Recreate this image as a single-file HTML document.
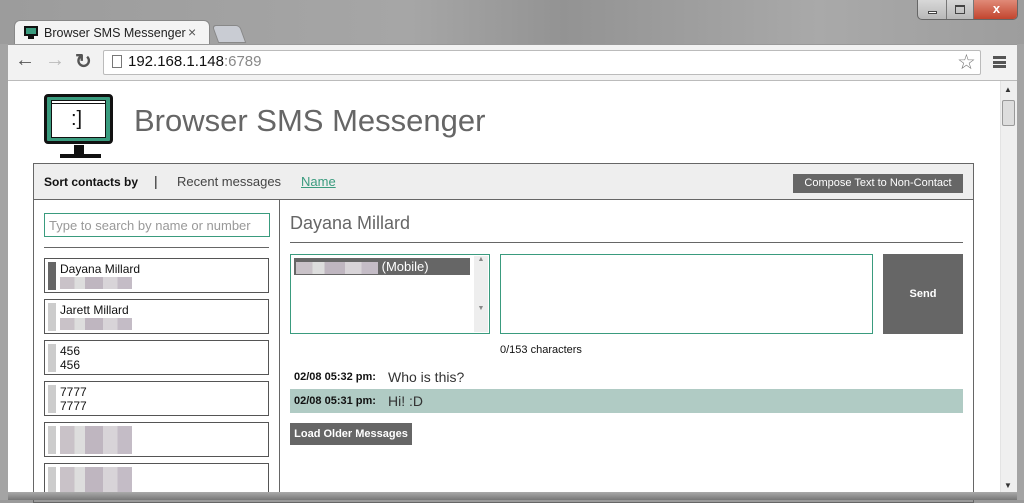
<!DOCTYPE html>
<html><head><style>
*{margin:0;padding:0;box-sizing:border-box}
body{width:1024px;height:500px;overflow:hidden;font-family:"Liberation Sans",sans-serif;background:#9a9a9a;position:relative}
.a{position:absolute}
.blur{display:inline-block;height:12px;background:linear-gradient(90deg,#c9c2c8 0 20%,#ddd 20% 35%,#bfb6c0 35% 60%,#d8d4d8 60% 80%,#c4bcc6 80%)}
</style></head><body>
<div class="a" style="left:0;top:0;width:1024px;height:46px;background:linear-gradient(90deg,#9c9c9c,#a6a6a6 40%,#939393 55%,#a9a9a9 80%,#9d9d9d)"></div>
<!-- window buttons -->
<div class="a" style="left:917px;top:0;width:101px;height:20px;border:1px solid #666;border-top:none;border-radius:0 0 5px 5px;background:linear-gradient(#d8d8d8,#b8b8b8);overflow:hidden">
<div class="a" style="left:0;top:0;width:29px;height:19px;border-right:1px solid #777"></div>
<div class="a" style="left:10px;top:11px;width:9px;height:3px;border:1px solid #444;background:#fff"></div>
<div class="a" style="left:29px;top:0;width:27px;height:19px;border-right:1px solid #777"></div>
<div class="a" style="left:37px;top:5px;width:10px;height:9px;border:1px solid #444;border-top-width:2px"></div>
<div class="a" style="left:56px;top:0;width:45px;height:19px;background:linear-gradient(#e08a78,#c2452e);color:#fff;font-weight:bold;font-size:13px;text-align:center;line-height:18px">x</div>
</div>
<!-- tab -->
<div class="a" style="left:14px;top:20px;width:196px;height:27px;background:#f4f4f4;border:1px solid #888;border-bottom:none;border-radius:6px 6px 0 0"></div>
<div class="a" style="left:24px;top:26px;width:14px;height:10px;border:2px solid #111;background:#3a9b7e"></div>
<div class="a" style="left:28px;top:36px;width:6px;height:3px;background:#111"></div>
<div class="a" style="left:44px;top:26px;font-size:12.5px;color:#222">Browser SMS Messenger</div>
<div class="a" style="left:188px;top:24px;font-size:14px;color:#555">×</div>
<div class="a" style="left:215px;top:25px;width:28px;height:18px;background:#c9ccd3;border:1px solid #888;border-radius:4px 4px 0 0;transform:skewX(20deg)"></div>
<!-- toolbar -->
<div class="a" style="left:8px;top:44px;width:1010px;height:37px;background:#f2f2f2;border-top:1px solid #999;border-bottom:1px solid #bbb"></div>
<div class="a" style="left:15px;top:49px;font-size:20px;color:#555;font-weight:bold">&#8592;</div>
<div class="a" style="left:45px;top:49px;font-size:20px;color:#bbb;font-weight:bold">&#8594;</div>
<div class="a" style="left:75px;top:49px;font-size:20px;color:#555;font-weight:bold">&#8635;</div>
<div class="a" style="left:103px;top:50px;width:878px;height:25px;background:#fff;border:1px solid #bbb;border-radius:2px"></div>
<div class="a" style="left:112px;top:55px;width:10px;height:13px;border:1px solid #777"></div>
<div class="a" style="left:128px;top:53px;font-size:15px;color:#111">192.168.1.148<span style="color:#888">:6789</span></div>
<div class="a" style="left:957px;top:50px;font-size:21px;color:#777">☆</div>
<div class="a" style="left:993px;top:56px;width:13px;height:12px;border-top:3px solid #555;border-bottom:3px solid #555"><div style="margin-top:2px;height:3px;background:#555"></div></div>
<!-- content -->
<div class="a" style="left:8px;top:81px;width:992px;height:411px;background:#fff"></div>
<div class="a" style="left:1000px;top:81px;width:17px;height:411px;background:#efefef;border-left:1px solid #e3e3e3"></div>
<div class="a" style="left:1002px;top:100px;width:13px;height:26px;background:#ddd;border:1px solid #999;border-radius:2px"></div>
<div class="a" style="left:1004px;top:85px;font-size:8px;color:#333">▲</div>
<div class="a" style="left:1004px;top:481px;font-size:8px;color:#333">▼</div>
<!-- logo -->
<div class="a" style="left:44px;top:94px;width:69px;height:50px;background:#3a9b7e;border:3px solid #111;border-radius:4px"></div>
<div class="a" style="left:51px;top:100px;width:55px;height:38px;background:#fff;border:1px solid #111"></div>
<div class="a" style="left:52px;top:102px;width:53px;height:2px;border-bottom:1px solid #111"></div>
<div class="a" style="left:71px;top:108px;font-size:20px;color:#111">:]</div>
<div class="a" style="left:74px;top:145px;width:10px;height:9px;background:#111"></div>
<div class="a" style="left:60px;top:154px;width:41px;height:4px;background:#111"></div>
<div class="a" style="left:134px;top:103px;font-size:31px;color:#666">Browser SMS Messenger</div>
<!-- panel -->
<div class="a" style="left:33px;top:163px;width:941px;height:340px;border:1px solid #666"></div>
<div class="a" style="left:34px;top:164px;width:939px;height:36px;background:#eee;border-bottom:1px solid #666"></div>
<div class="a" style="left:44px;top:175px;font-size:12px;font-weight:bold;color:#111">Sort contacts by</div>
<div class="a" style="left:154px;top:173px;font-size:14px;color:#222">|</div>
<div class="a" style="left:177px;top:174px;font-size:13px;color:#444">Recent messages</div>
<div class="a" style="left:301px;top:174px;font-size:13px;color:#3a9b7e;text-decoration:underline">Name</div>
<div class="a" style="left:793px;top:174px;width:170px;height:19px;background:#666;color:#fff;font-size:11px;text-align:center;line-height:19px">Compose Text to Non-Contact</div>
<div class="a" style="left:279px;top:200px;width:1px;height:300px;background:#666"></div>
<!-- left -->
<div class="a" style="left:44px;top:213px;width:226px;height:24px;border:1px solid #3a9b7e;font-size:13px;color:#999;padding:4px 4px">Type to search by name or number</div>
<div class="a" style="left:44px;top:247px;width:225px;height:1px;background:#666"></div>
<div class="a" style="left:44px;top:258px;width:225px;height:35px;border:1px solid #555"><div class="a" style="left:3px;top:3px;width:8px;height:28px;background:#666"></div><div class="a" style="left:15px;top:3px;font-size:12px;color:#111">Dayana Millard</div><div class="a blur" style="left:15px;top:18px;width:72px"></div></div>
<div class="a" style="left:44px;top:299px;width:225px;height:35px;border:1px solid #555"><div class="a" style="left:3px;top:3px;width:8px;height:28px;background:#ccc"></div><div class="a" style="left:15px;top:3px;font-size:12px;color:#111">Jarett Millard</div><div class="a blur" style="left:15px;top:18px;width:72px"></div></div>
<div class="a" style="left:44px;top:340px;width:225px;height:35px;border:1px solid #555"><div class="a" style="left:3px;top:3px;width:8px;height:28px;background:#ccc"></div><div class="a" style="left:15px;top:3px;font-size:12px;line-height:14px;color:#111">456<br>456</div></div>
<div class="a" style="left:44px;top:381px;width:225px;height:35px;border:1px solid #555"><div class="a" style="left:3px;top:3px;width:8px;height:28px;background:#ccc"></div><div class="a" style="left:15px;top:3px;font-size:12px;line-height:14px;color:#111">7777<br>7777</div></div>
<div class="a" style="left:44px;top:422px;width:225px;height:35px;border:1px solid #555"><div class="a" style="left:3px;top:3px;width:8px;height:28px;background:#ccc"></div><div class="a blur" style="left:15px;top:3px;width:72px;height:28px"></div></div>
<div class="a" style="left:44px;top:463px;width:225px;height:35px;border:1px solid #555"><div class="a" style="left:3px;top:3px;width:8px;height:28px;background:#ccc"></div><div class="a blur" style="left:15px;top:3px;width:72px;height:28px"></div></div>
<!-- right -->
<div class="a" style="left:290px;top:213px;font-size:18px;color:#666">Dayana Millard</div>
<div class="a" style="left:290px;top:242px;width:673px;height:1px;background:#666"></div>
<div class="a" style="left:290px;top:254px;width:200px;height:80px;border:1px solid #3a9b7e"><div class="a" style="left:3px;top:3px;width:176px;height:17px;background:#666;color:#fff;font-size:13px;line-height:17px;padding-left:2px"><span class="blur" style="width:82px;vertical-align:middle"></span> (Mobile)</div><div class="a" style="right:1px;top:1px;width:14px;height:76px;background:#eee;font-size:7px;color:#888;text-align:center">▲<br><br><br><br><br><br><br>▼</div></div>
<div class="a" style="left:500px;top:254px;width:373px;height:80px;border:1px solid #3a9b7e"></div>
<div class="a" style="left:883px;top:254px;width:80px;height:80px;background:#666;color:#fff;font-size:11px;font-weight:bold;text-align:center;line-height:80px">Send</div>
<div class="a" style="left:500px;top:344px;font-size:11px;color:#111">0/153 characters</div>
<div class="a" style="left:294px;top:371px;font-size:11px;font-weight:bold;color:#111">02/08 05:32 pm:</div>
<div class="a" style="left:388px;top:369px;font-size:14px;color:#333">Who is this?</div>
<div class="a" style="left:290px;top:389px;width:673px;height:24px;background:#b0cbc4"></div>
<div class="a" style="left:294px;top:395px;font-size:11px;font-weight:bold;color:#111">02/08 05:31 pm:</div>
<div class="a" style="left:388px;top:393px;font-size:14px;color:#333">Hi! :D</div>
<div class="a" style="left:290px;top:423px;width:122px;height:22px;background:#666;color:#fff;font-size:11px;font-weight:bold;text-align:center;line-height:22px">Load Older Messages</div>
<!-- frame bottom -->
<div class="a" style="left:0;top:492px;width:1024px;height:8px;background:linear-gradient(#aaa,#777)"></div>
<div class="a" style="left:0;top:44px;width:8px;height:456px;background:#a4a4a4"></div>
<div class="a" style="left:1017px;top:44px;width:7px;height:456px;background:#a4a4a4"></div>
</body></html>
